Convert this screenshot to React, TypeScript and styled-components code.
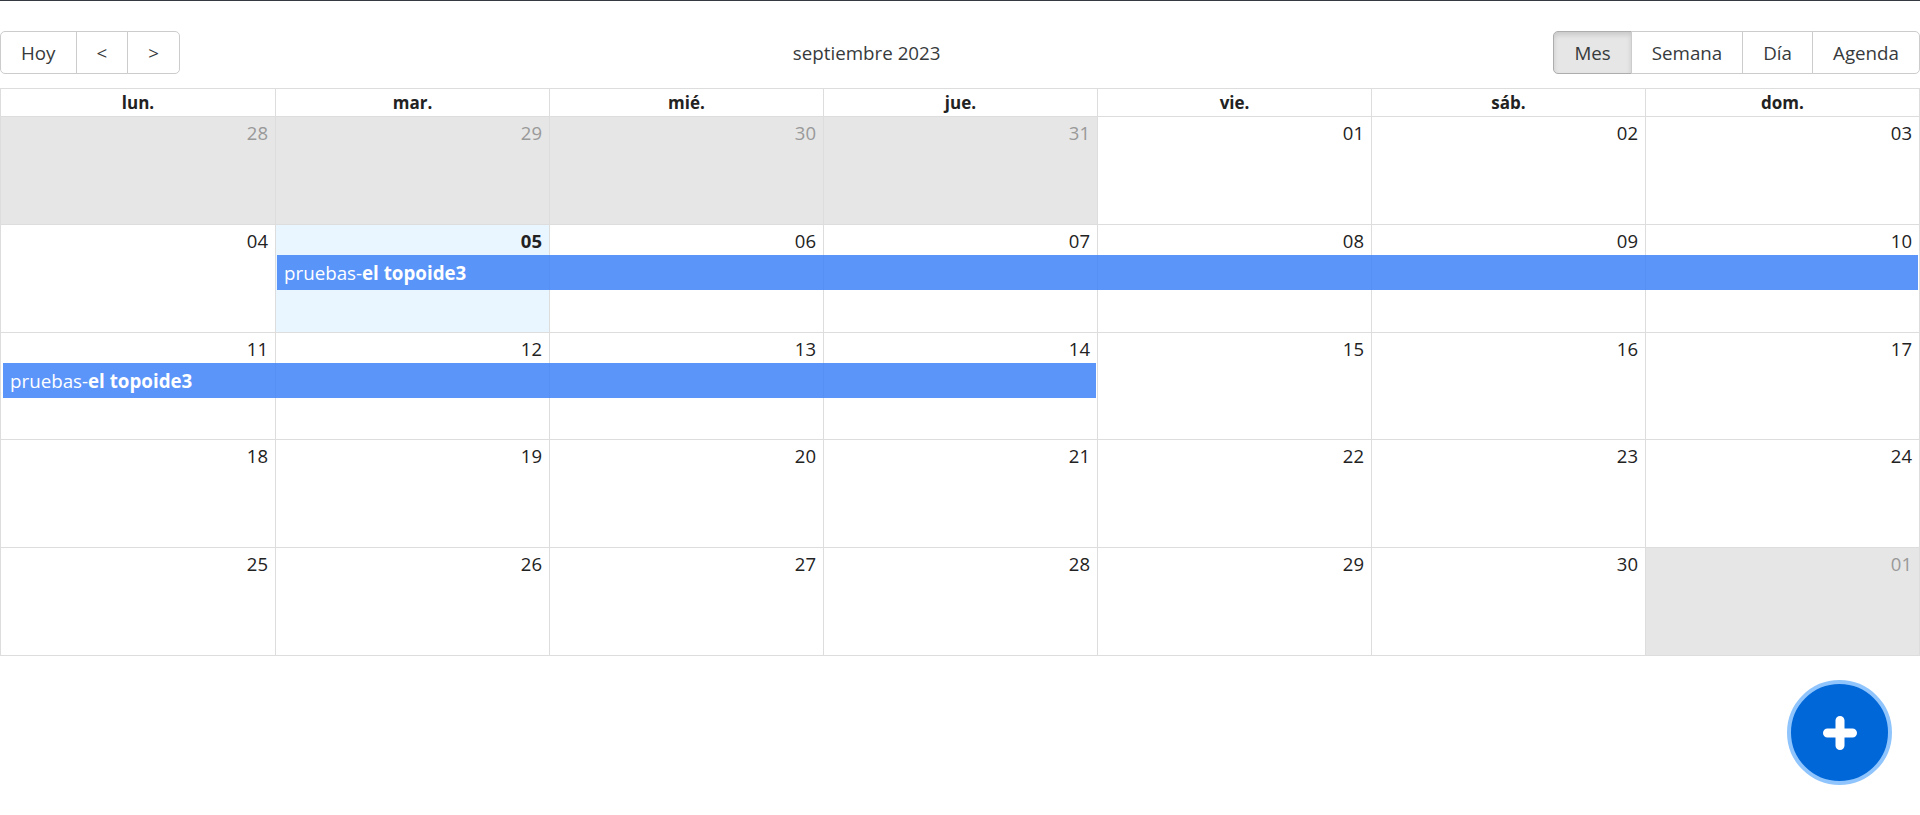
import React from 'react'
import styled, { createGlobalStyle } from 'styled-components'

const GlobalStyle = createGlobalStyle`
    html, body {
        margin: 0;
        padding: 0;
        background: #fff;
    }
    body {
        font-family: "Open Sans", "Noto Sans", sans-serif;
        font-size: 18.75px;
        color: #373a3c;
    }
    * {
        box-sizing: border-box;
    }
`

type DayKind = 'normal' | 'off' | 'today'

interface Day {
    label: string
    kind: DayKind
}

interface CalEvent {
    start: number
    span: number
    title: string
    bold: string
}

interface Week {
    days: Day[]
    events: CalEvent[]
}

const mk = (labels: string[], kinds: Partial<Record<number, DayKind>> = {}): Day[] =>
    labels.map((label, i) => ({ label, kind: kinds[i] || 'normal' }))

const weeks: Week[] = [
    { days: mk(['28', '29', '30', '31', '01', '02', '03'], { 0: 'off', 1: 'off', 2: 'off', 3: 'off' }), events: [] },
    {
        days: mk(['04', '05', '06', '07', '08', '09', '10'], { 1: 'today' }),
        events: [{ start: 2, span: 6, title: 'pruebas-', bold: 'el topoide3' }],
    },
    {
        days: mk(['11', '12', '13', '14', '15', '16', '17']),
        events: [{ start: 1, span: 4, title: 'pruebas-', bold: 'el topoide3' }],
    },
    { days: mk(['18', '19', '20', '21', '22', '23', '24']), events: [] },
    { days: mk(['25', '26', '27', '28', '29', '30', '01'], { 6: 'off' }), events: [] },
]

const weekdays = ['lun.', 'mar.', 'mié.', 'jue.', 'vie.', 'sáb.', 'dom.']

const Page = styled.div`
    border-top: 1px solid #343a40;
    padding-top: 30px;
`

const Toolbar = styled.div`
    display: flex;
    align-items: center;
    margin-bottom: 14px;
`

const BtnGroup = styled.div`
    display: inline-flex;
    white-space: nowrap;
`

const Btn = styled.button<{ $active?: boolean }>`
    font-family: inherit;
    font-size: 18.75px;
    line-height: 25px;
    color: #373a3c;
    padding: 8px 20px;
    margin: 0;
    background: ${({ $active }) => ($active ? '#e6e6e6' : '#fff')};
    border: 1px solid ${({ $active }) => ($active ? '#adadad' : '#ccc')};
    box-shadow: ${({ $active }) => ($active ? 'inset 0 3px 5px rgba(0, 0, 0, 0.125)' : 'none')};
    border-radius: 0;
    cursor: pointer;

    & + & {
        margin-left: -1px;
    }
    &:first-child {
        border-radius: 5px 0 0 5px;
    }
    &:last-child {
        border-radius: 0 5px 5px 0;
    }
`

const Label = styled.span`
    flex: 1;
    text-align: center;
    padding: 0 10px;
    font-size: 18.75px;
`

const Month = styled.div`
    display: flex;
    flex-direction: column;
    height: 568px;
    border: 1px solid #ddd;
`

const HeaderRow = styled.div`
    display: grid;
    grid-template-columns: repeat(7, 1fr);
    height: 28px;
    flex: none;
`

const HeaderCell = styled.div`
    text-align: center;
    font-weight: 700;
    font-size: 17px;
    line-height: 27px;
    color: #222;
    border-bottom: 1px solid #ddd;
    & + & {
        border-left: 1px solid #ddd;
    }
`

const WeekRow = styled.div`
    flex: 1;
    display: grid;
    grid-template-columns: repeat(7, 1fr);
    grid-template-rows: 30px 35px 1fr;
    & + & {
        border-top: 1px solid #ddd;
    }
`

const BgCell = styled.div<{ $col: number; $kind: DayKind }>`
    grid-row: 1 / -1;
    grid-column: ${({ $col }) => $col};
    background: ${({ $kind }) => ($kind === 'off' ? '#e6e6e6' : $kind === 'today' ? '#eaf6ff' : '#fff')};
    border-left: ${({ $col }) => ($col === 1 ? 'none' : '1px solid #ddd')};
`

const DateCell = styled.div<{ $col: number; $kind: DayKind }>`
    grid-row: 1;
    grid-column: ${({ $col }) => $col};
    text-align: right;
    padding: 4px 7px 0 0;
    line-height: 24px;
    font-size: 18.5px;
    font-weight: ${({ $kind }) => ($kind === 'today' ? 700 : 400)};
    color: ${({ $kind }) => ($kind === 'off' ? '#999' : '#222')};
`

const EventBar = styled.div`
    grid-row: 2;
    margin: 0 1px 0 2px;
    background: rgba(64, 130, 248, 0.85);
    color: #fff;
    font-size: 18.75px;
    line-height: 35px;
    padding: 0 7px;
    white-space: nowrap;
    overflow: hidden;
    text-overflow: ellipsis;
    cursor: pointer;

    b {
        font-weight: 700;
    }
`

const Fab = styled.button`
    position: fixed;
    right: 28px;
    bottom: 30px;
    width: 105px;
    height: 105px;
    border-radius: 50%;
    background: #0067d8;
    border: 4px solid #8fc5fc;
    display: flex;
    align-items: center;
    justify-content: center;
    padding: 0;
    cursor: pointer;
`

const PlusIcon = () => (
    <svg width="34" height="34" viewBox="0 0 34 34">
        <path d="M17 4.5v25M4.5 17h25" stroke="#fff" strokeWidth="9" strokeLinecap="round" fill="none" />
    </svg>
)

const App = () => {
    return (
        <>
            <GlobalStyle />
            <Page>
                <Toolbar>
                    <BtnGroup>
                        <Btn>Hoy</Btn>
                        <Btn>&lt;</Btn>
                        <Btn>&gt;</Btn>
                    </BtnGroup>
                    <Label>septiembre 2023</Label>
                    <BtnGroup>
                        <Btn $active>Mes</Btn>
                        <Btn>Semana</Btn>
                        <Btn>Día</Btn>
                        <Btn>Agenda</Btn>
                    </BtnGroup>
                </Toolbar>

                <Month>
                    <HeaderRow>
                        {weekdays.map((d) => (
                            <HeaderCell key={d}>{d}</HeaderCell>
                        ))}
                    </HeaderRow>
                    {weeks.map((w, wi) => (
                        <WeekRow key={wi}>
                            {w.days.map((d, i) => (
                                <BgCell key={'bg' + i} $col={i + 1} $kind={d.kind} />
                            ))}
                            {w.days.map((d, i) => (
                                <DateCell key={'d' + i} $col={i + 1} $kind={d.kind}>
                                    {d.label}
                                </DateCell>
                            ))}
                            {w.events.map((e, ei) => (
                                <EventBar key={ei} style={{ gridColumn: `${e.start} / span ${e.span}` }}>
                                    {e.title}
                                    <b>{e.bold}</b>
                                </EventBar>
                            ))}
                        </WeekRow>
                    ))}
                </Month>
            </Page>
            <Fab aria-label="Nuevo evento">
                <PlusIcon />
            </Fab>
        </>
    )
}

export default App
